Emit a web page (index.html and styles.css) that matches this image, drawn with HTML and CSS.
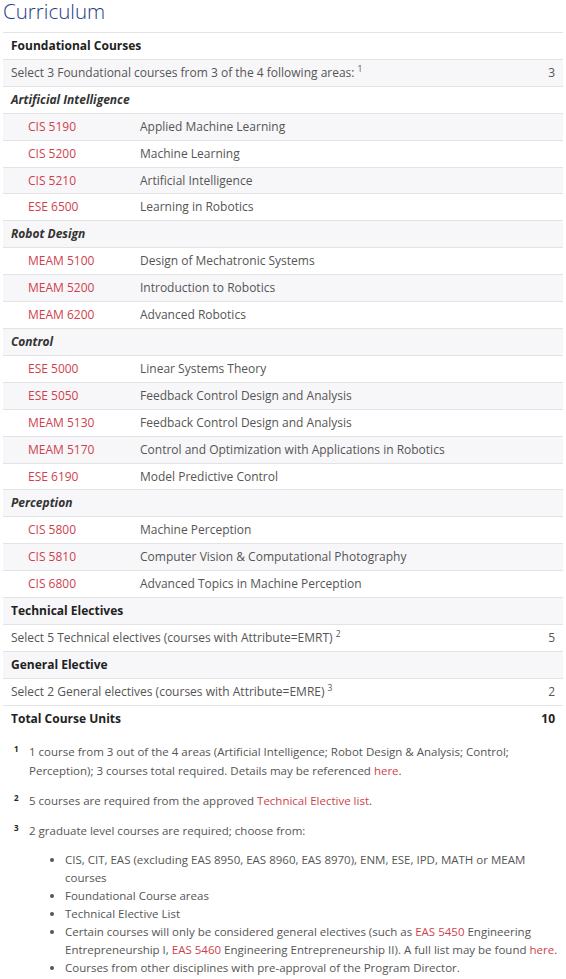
FILE: index.html
```html
<!DOCTYPE html>
<html lang="en">
<head>
    <meta charset="UTF-8">
    <meta name="viewport" content="width=device-width, initial-scale=1.0">
    <title>Curriculum</title>
    <link rel="stylesheet" href="styles.css">
</head>
<body>
    <div class="page">
    <h2 class="title">Curriculum</h2>

    <table class="courselist">
        <tbody>
            <tr class="head"><td colspan="3">Foundational Courses</td></tr>
            <tr><td colspan="2">Select 3 Foundational courses from 3 of the 4 following areas: <sup>1</sup></td><td class="hours">3</td></tr>
            <tr class="area"><td colspan="3">Artificial Intelligence</td></tr>
            <tr><td class="code"><a href="#">CIS 5190</a></td><td>Applied Machine Learning</td><td class="hours"></td></tr>
            <tr><td class="code"><a href="#">CIS 5200</a></td><td>Machine Learning</td><td class="hours"></td></tr>
            <tr><td class="code"><a href="#">CIS 5210</a></td><td>Artificial Intelligence</td><td class="hours"></td></tr>
            <tr><td class="code"><a href="#">ESE 6500</a></td><td>Learning in Robotics</td><td class="hours"></td></tr>
            <tr class="area"><td colspan="3">Robot Design</td></tr>
            <tr><td class="code"><a href="#">MEAM 5100</a></td><td>Design of Mechatronic Systems</td><td class="hours"></td></tr>
            <tr><td class="code"><a href="#">MEAM 5200</a></td><td>Introduction to Robotics</td><td class="hours"></td></tr>
            <tr><td class="code"><a href="#">MEAM 6200</a></td><td>Advanced Robotics</td><td class="hours"></td></tr>
            <tr class="area"><td colspan="3">Control</td></tr>
            <tr><td class="code"><a href="#">ESE 5000</a></td><td>Linear Systems Theory</td><td class="hours"></td></tr>
            <tr><td class="code"><a href="#">ESE 5050</a></td><td>Feedback Control Design and Analysis</td><td class="hours"></td></tr>
            <tr><td class="code"><a href="#">MEAM 5130</a></td><td>Feedback Control Design and Analysis</td><td class="hours"></td></tr>
            <tr><td class="code"><a href="#">MEAM 5170</a></td><td>Control and Optimization with Applications in Robotics</td><td class="hours"></td></tr>
            <tr><td class="code"><a href="#">ESE 6190</a></td><td>Model Predictive Control</td><td class="hours"></td></tr>
            <tr class="area"><td colspan="3">Perception</td></tr>
            <tr><td class="code"><a href="#">CIS 5800</a></td><td>Machine Perception</td><td class="hours"></td></tr>
            <tr><td class="code"><a href="#">CIS 5810</a></td><td>Computer Vision &amp; Computational Photography</td><td class="hours"></td></tr>
            <tr><td class="code"><a href="#">CIS 6800</a></td><td>Advanced Topics in Machine Perception</td><td class="hours"></td></tr>
            <tr class="head"><td colspan="3">Technical Electives</td></tr>
            <tr><td colspan="2">Select 5 Technical electives (courses with Attribute=EMRT) <sup>2</sup></td><td class="hours">5</td></tr>
            <tr class="head"><td colspan="3">General Elective</td></tr>
            <tr><td colspan="2">Select 2 General electives (courses with Attribute=EMRE) <sup>3</sup></td><td class="hours">2</td></tr>
        </tbody>
        <tfoot>
            <tr class="total"><td colspan="2">Total Course Units</td><td class="hours">10</td></tr>
        </tfoot>
    </table>

    <div class="notes">
        <div class="note">
            <span class="num">1</span>
            <p>1 course from 3 out of the 4 areas (Artificial Intelligence; Robot Design &amp; Analysis; Control; Perception); 3 courses total required. Details may be referenced <a href="#">here</a>.</p>
        </div>
        <div class="note">
            <span class="num">2</span>
            <p>5 courses are required from the approved <a href="#">Technical Elective list</a>.</p>
        </div>
        <div class="note">
            <span class="num">3</span>
            <div>
                <p>2 graduate level courses are required; choose from:</p>
                <ul>
                    <li>CIS, CIT, EAS (excluding EAS 8950, EAS 8960, EAS 8970), ENM, ESE, IPD, MATH or MEAM courses</li>
                    <li>Foundational Course areas</li>
                    <li>Technical Elective List</li>
                    <li>Certain courses will only be considered general electives (such as <a href="#">EAS 5450</a> Engineering Entrepreneurship I, <a href="#">EAS 5460</a> Engineering Entrepreneurship II). A full list may be found <a href="#">here</a>.</li>
                    <li>Courses from other disciplines with pre-approval of the Program Director.</li>
                </ul>
            </div>
        </div>
    </div>
    </div>
</body>
</html>
```

FILE: styles.css
```css
body {
    margin: 0;
    font-family: "Open Sans", Arial, sans-serif;
    color: #555;
    background: #fff;
}
a {
    color: #cf3f4c;
    text-decoration: none;
}
.page {
    padding: 0 3px;
}
.title {
    margin: 0 0 10px;
    height: 22px;
    font-size: 20.5px;
    font-weight: 300;
    line-height: 22px;
    color: #1e3a85;
}
.courselist {
    width: 100%;
    border-collapse: collapse;
    border-top: 1px solid #e3e3e3;
    font-size: 12px;
}
.courselist td {
    padding: 4px 8px;
    height: 17.9px;
    line-height: 17.9px;
    border-bottom: 1px solid #e3e3e3;
    white-space: nowrap;
}
.courselist tbody tr:nth-child(even) {
    background: #f7f7f9;
}
.courselist sup {
    font-size: 8.5px;
    line-height: 0;
    vertical-align: 5px;
}
.courselist .code {
    width: 96px;
    padding-left: 25px;
}
.courselist .hours {
    text-align: right;
    width: 30px;
}
.courselist .head td,
.courselist .total td {
    font-weight: 700;
    color: #222;
}
.courselist .area td {
    font-weight: 700;
    font-style: italic;
    color: #333;
}
.courselist .total td {
    border-bottom: none;
}
.notes {
    margin-top: 10px;
    font-size: 11.5px;
    line-height: 19px;
}
.note {
    display: flex;
    margin-bottom: 11px;
}
.note .num {
    flex: 0 0 15px;
    padding-left: 11px;
    font-size: 8px;
    font-weight: 700;
    color: #222;
    line-height: 14px;
}
.note p {
    margin: 0;
}
.note ul {
    margin: 11px 0 0;
    padding-left: 36px;
    line-height: 18px;
}
```
